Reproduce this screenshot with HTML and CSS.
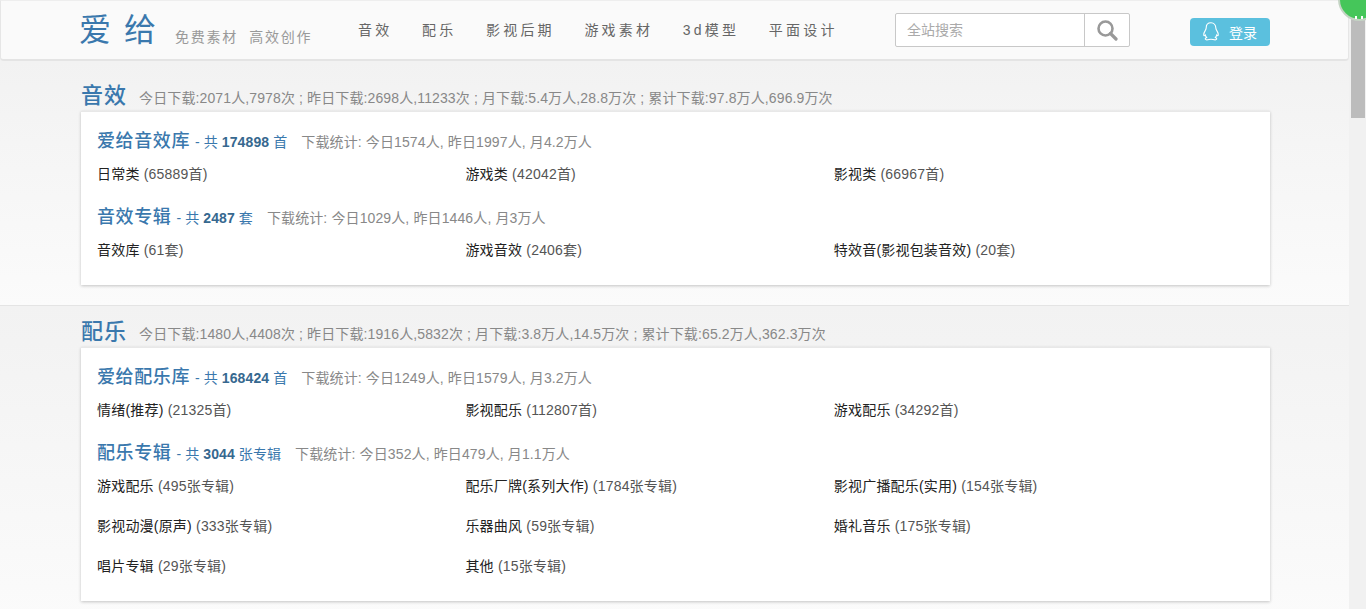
FILE: index.html
```html
<!DOCTYPE html>
<html lang="zh-CN">
<head>
<meta charset="utf-8">
<title>爱给</title>
<link rel="stylesheet" href="styles.css">
</head>
<body>
<div class="page">
  <header class="header">
    <div class="header-inner">
      <a class="logo">爱给</a>
      <span class="slogan">免费素材&nbsp;&nbsp;高效创作</span>
      <nav class="nav">
        <a>音效</a><a>配乐</a><a>影视后期</a><a>游戏素材</a><a>3d模型</a><a>平面设计</a>
      </nav>
      <div class="search">
        <div class="search-input">全站搜索</div>
        <div class="search-btn">
          <svg width="22" height="22" viewBox="0 0 22 22"><circle cx="9.500" cy="9.500" r="7" fill="none" stroke="#999" stroke-width="2.600"/><path d="M14.500 14.500l5.500 5.500" stroke="#999" stroke-width="3.200" stroke-linecap="round"/></svg>
        </div>
      </div>
      <a class="login">
        <svg width="16" height="19" viewBox="0 0 16 19"><path d="M8 .8C5 .8 3.200 3 3.200 5.800c0 1.200-.4 1.800-1 2.800C1.200 10.200.6 11.800.8 13.200c.1.800.6.800 1.400-.2.300 1 .8 1.900 1.500 2.600-1 .4-1.600.9-1.400 1.500.3.700 2.400.8 3.700.4.800-.2 3.200-.2 4 0 1.300.4 3.400.3 3.700-.4.200-.6-.4-1.100-1.400-1.500.7-.7 1.200-1.600 1.500-2.600.8 1 1.300 1 1.400.2.200-1.400-.4-3-1.400-4.600-.6-1-1-1.600-1-2.800C12.800 3 11 .8 8 .8z" fill="none" stroke="#fff" stroke-width="1.100"/></svg>
        <span>登录</span>
      </a>
    </div>
  </header>

  <section class="section section-first">
    <div class="section-head">
      <h2>音效</h2>
      <span class="stats">今日下载:2071人,7978次 ; 昨日下载:2698人,11233次 ; 月下载:5.4万人,28.8万次 ; 累计下载:97.8万人,696.9万次</span>
    </div>
    <div class="card">
      <div class="group-head">
        <a class="group-title">爱给音效库</a>
        <span class="count">- 共 <b>174898</b> 首</span>
        <span class="stats">下载统计: 今日1574人, 昨日1997人, 月4.2万人</span>
      </div>
      <ul class="items">
        <li>日常类 <i>(65889首)</i></li>
        <li>游戏类 <i>(42042首)</i></li>
        <li>影视类 <i>(66967首)</i></li>
      </ul>
      <div class="group-head group-next">
        <a class="group-title">音效专辑</a>
        <span class="count">- 共 <b>2487</b> 套</span>
        <span class="stats">下载统计: 今日1029人, 昨日1446人, 月3万人</span>
      </div>
      <ul class="items">
        <li>音效库 <i>(61套)</i></li>
        <li>游戏音效 <i>(2406套)</i></li>
        <li>特效音(影视包装音效) <i>(20套)</i></li>
      </ul>
    </div>
  </section>

  <section class="section">
    <div class="section-head">
      <h2>配乐</h2>
      <span class="stats">今日下载:1480人,4408次 ; 昨日下载:1916人,5832次 ; 月下载:3.8万人,14.5万次 ; 累计下载:65.2万人,362.3万次</span>
    </div>
    <div class="card">
      <div class="group-head">
        <a class="group-title">爱给配乐库</a>
        <span class="count">- 共 <b>168424</b> 首</span>
        <span class="stats">下载统计: 今日1249人, 昨日1579人, 月3.2万人</span>
      </div>
      <ul class="items">
        <li>情绪(推荐) <i>(21325首)</i></li>
        <li>影视配乐 <i>(112807首)</i></li>
        <li>游戏配乐 <i>(34292首)</i></li>
      </ul>
      <div class="group-head group-next">
        <a class="group-title">配乐专辑</a>
        <span class="count">- 共 <b>3044</b> 张专辑</span>
        <span class="stats">下载统计: 今日352人, 昨日479人, 月1.1万人</span>
      </div>
      <ul class="items">
        <li>游戏配乐 <i>(495张专辑)</i></li>
        <li>配乐厂牌(系列大作) <i>(1784张专辑)</i></li>
        <li>影视广播配乐(实用) <i>(154张专辑)</i></li>
        <li>影视动漫(原声) <i>(333张专辑)</i></li>
        <li>乐器曲风 <i>(59张专辑)</i></li>
        <li>婚礼音乐 <i>(175张专辑)</i></li>
        <li>唱片专辑 <i>(29张专辑)</i></li>
        <li>其他 <i>(15张专辑)</i></li>
      </ul>
    </div>
  </section>
</div>
<div class="scrollbar"><div class="thumb"></div></div>
<div class="badge"></div>
</body>
</html>
```
FILE: styles.css
```css
* { box-sizing: border-box; }
html, body { margin: 0; padding: 0; height: 100%; overflow: hidden; }
body {
  display: flex;
  background: #f1f1f1;
  font-family: "Liberation Sans", "Noto Sans CJK SC", sans-serif;
  font-size: 14px;
  color: #333;
}
.page { width: 1349px; flex: none; }
.scrollbar { flex: 1; padding: 0 1px 0 2px; background: #f1f1f1; }
.thumb { height: 118px; background: #bcbcbc; }
.badge {
  position: absolute;
  left: 1338px;
  top: -22px;
  width: 43px;
  height: 43px;
  border-radius: 50%;
  background: #45c65a;
  border: 2px solid #c4d4c4;
}
.badge::after {
  content: "";
  position: absolute;
  left: 15px;
  bottom: 0;
  width: 2px;
  height: 3px;
  background: #fff;
  box-shadow: 6px 0 #fff;
}

.header {
  height: 61px;
  background: #fafafa;
  border: 1px solid #e6e6e6;
  border-top-color: #eee;
  border-bottom: 2px solid #e4e4e4;
  border-radius: 0 0 4px 4px;
}
.header-inner { display: flex; align-items: center; height: 57px; padding-left: 78px; }
.logo {
  width: 96px;
  font-size: 32px;
  letter-spacing: 13px;
  color: #3a78ad;
  line-height: 56px;
  white-space: nowrap;
}
.slogan {
  width: 183px;
  padding-top: 12px;
  font-size: 14px;
  letter-spacing: 1.750px;
  color: #999;
  white-space: nowrap;
}
.nav { display: flex; gap: 29.600px; width: 537px; margin-top: -2px; color: #666; letter-spacing: 3.200px; white-space: nowrap; }
.search { display: flex; width: 235px; height: 34px; margin-top: 1px; background: #fff; border: 1px solid #c8c8c8; border-radius: 2px; }
.search-input { flex: 1; padding-left: 11px; line-height: 32px; color: #aaa; }
.search-btn { width: 45px; display: flex; align-items: center; justify-content: center; border-left: 1px solid #c8c8c8; }
.login {
  display: flex;
  align-items: center;
  gap: 10px;
  width: 80px;
  height: 28px;
  margin: 4px 0 0 60px;
  padding-left: 13px;
  background: #5bc0de;
  border-radius: 4px;
  color: #fff;
  font-size: 14px;
}

.section {
  padding: 9px 79px 20px 81px;
  background: linear-gradient(#f2f2f2, #fbfbfb);
  border-bottom: 1px solid #e4e4e4;
}
.section-first { padding-top: 18px; }
.section-head { display: flex; align-items: baseline; height: 32px; }
.section-head h2 {
  margin: 0 12px 0 0;
  font-size: 22px;
  font-weight: 500;
  letter-spacing: 1px;
  line-height: 34px;
  color: #3a78ad;
}
.stats { color: #888; font-size: 14px; letter-spacing: .12px; white-space: nowrap; }
.card {
  padding: 17px 16px 14px;
  background: #fff;
  border-top: 1px solid #e8e8e8;
  box-shadow: 0 1px 3px rgba(0, 0, 0, .22);
}
.group-head { display: flex; align-items: baseline; height: 26px; line-height: 24px; white-space: nowrap; }
.group-next { margin-top: 10px; }
.group-title { font-size: 18px; font-weight: 500; letter-spacing: .6px; color: #3a78ad; }
.count { margin: 0 14px 0 5px; color: #3a78ad; letter-spacing: .1px; }
.count b { color: #36688f; }
.items { display: grid; grid-template-columns: repeat(3, 368.400px); margin: 0; padding: 0; list-style: none; }
.items li { height: 40px; line-height: 38px; color: #222; letter-spacing: .2px; white-space: nowrap; }
.items i { font-style: normal; color: #555; }
```
